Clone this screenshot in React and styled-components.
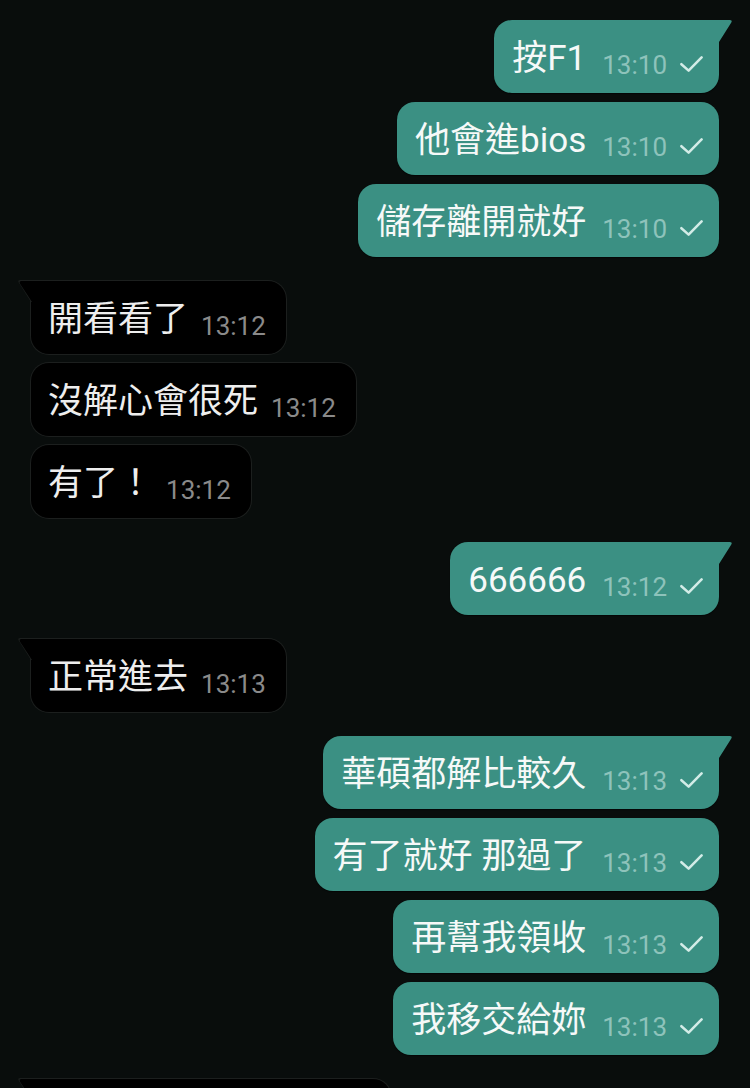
import React from "react";
import styled, { createGlobalStyle, css } from "styled-components";

const Global = createGlobalStyle`
  html, body {
    margin: 0;
    padding: 0;
    background: #090d0c;
  }
  body {
    font-family: Roboto, "Noto Sans CJK TC", "Noto Sans", sans-serif;
    -webkit-font-smoothing: antialiased;
  }
`;

const Screen = styled.div`
  width: 750px;
  min-height: 1088px;
  box-sizing: border-box;
  padding: 20px 31px 40px;
  display: flex;
  flex-direction: column;
  gap: 24px;
  background: #090d0c;
  overflow: hidden;
`;

const Group = styled.div`
  display: flex;
  flex-direction: column;
  gap: 9px;
  align-items: ${(p) => (p.$out ? "flex-end" : "flex-start")};
`;

const Bubble = styled.div`
  position: relative;
  box-sizing: border-box;
  height: 73px;
  display: flex;
  align-items: baseline;
  padding: 18px ${(p) => (p.$out ? "16px" : "20px")} 0 ${(p) => (p.$out ? "18px" : "17px")};
  border-radius: 18px;
  background: ${(p) => (p.$out ? "#3b9083" : "#000000")};
  color: ${(p) => (p.$out ? "#f6f9f8" : "#eeeeee")};
  white-space: nowrap;
  ${(p) =>
    p.$out
      ? css`
          box-shadow: 0 1px 1px rgba(0, 0, 0, 0.55);
        `
      : css`
          box-shadow: 0 0 0 1px #1c1f1e;
        `}
  ${(p) =>
    p.$tail &&
    p.$out &&
    css`
      border-top-right-radius: 0;
      &::after {
        content: "";
        position: absolute;
        top: 0;
        right: -14px;
        width: 15px;
        height: 22px;
        background: #3b9083;
        clip-path: path("M0 0 H11.5 Q15 0 13 3 L1 22 H0 Z");
      }
    `}
  ${(p) =>
    p.$tail &&
    !p.$out &&
    css`
      border-top-left-radius: 0;
      &::before {
        content: "";
        position: absolute;
        top: -1px;
        left: -14px;
        width: 15px;
        height: 22px;
        background: #1c1f1e;
        clip-path: path("M15 0 H3.5 Q0 0 2 3 L14 22 H15 Z");
      }
      &::after {
        content: "";
        position: absolute;
        top: 0;
        left: -13px;
        width: 14px;
        height: 21px;
        background: #000;
        clip-path: path("M14 0 H3.5 Q0.5 0 2.2 3 L14 21 Z");
      }
    `}
`;

const Text = styled.span`
  font-size: 35px;
  line-height: 41px;
  letter-spacing: 0;
`;

const Meta = styled.span`
  display: inline-flex;
  align-items: center;
  margin-left: ${(p) => (p.$out ? "16px" : "13px")};
  position: relative;
  top: 4px;
`;

const Time = styled.span`
  font-family: Roboto, "Noto Sans", sans-serif;
  font-size: 26px;
  line-height: normal;
  color: ${(p) => (p.$out ? "#8ec3bb" : "#8a8a8a")};
`;

const CheckIcon = styled.svg`
  width: 23px;
  height: 16px;
  margin-left: 13px;
  margin-bottom: 3px;
  flex: none;
`;

const Check = () => (
  <CheckIcon viewBox="0 0 23 16" aria-hidden="true">
    <path
      d="M1.4 8.2 L8.6 14.6 L21.6 1.4"
      fill="none"
      stroke="#d3ece7"
      strokeWidth="2.5"
      strokeLinecap="round"
      strokeLinejoin="round"
    />
  </CheckIcon>
);

const groups = [
  {
    out: true,
    items: [
      ["按F1", "13:10"],
      ["他會進bios", "13:10"],
      ["儲存離開就好", "13:10"],
    ],
  },
  {
    out: false,
    items: [
      ["開看看了", "13:12"],
      ["沒解心會很死", "13:12"],
      ["有了！", "13:12"],
    ],
  },
  { out: true, items: [["666666", "13:12"]] },
  { out: false, items: [["正常進去", "13:13"]] },
  {
    out: true,
    items: [
      ["華碩都解比較久", "13:13"],
      ["有了就好 那過了", "13:13"],
      ["再幫我領收", "13:13"],
      ["我移交給妳", "13:13"],
    ],
  },
  { out: false, items: [["好的我等等去看", "13:14"]] },
];

export default function App() {
  return (
    <>
      <Global />
      <Screen>
        {groups.map((g, gi) => (
          <Group key={gi} $out={g.out}>
            {g.items.map(([text, time], i) => (
              <Bubble key={i} $out={g.out} $tail={i === 0}>
                <Text>{text}</Text>
                <Meta $out={g.out}>
                  <Time $out={g.out}>{time}</Time>
                  {g.out && <Check />}
                </Meta>
              </Bubble>
            ))}
          </Group>
        ))}
      </Screen>
    </>
  );
}
